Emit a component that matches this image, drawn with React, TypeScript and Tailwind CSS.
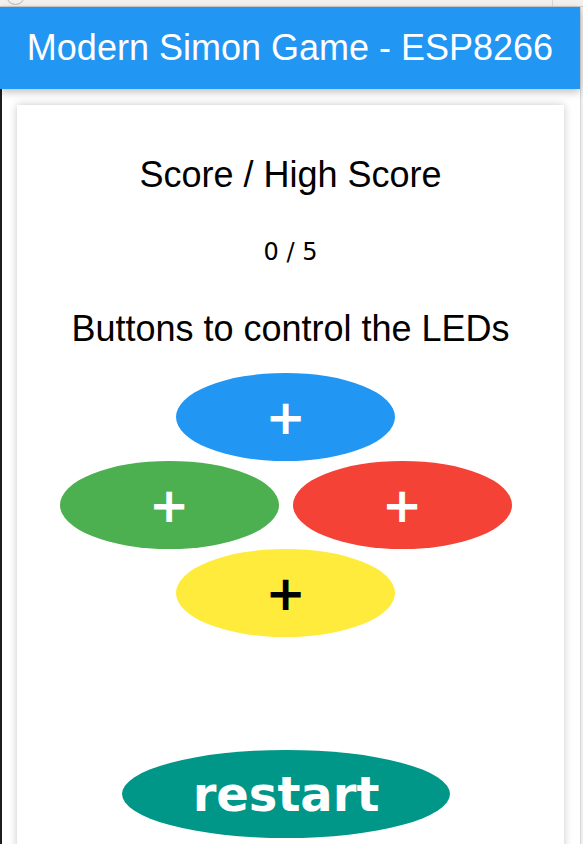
import React from "react";

const pads = {
  blue: "bg-[#2196F3] text-white",
  green: "bg-[#4CAF50] text-white",
  red: "bg-[#F44336] text-white",
  yellow: "bg-[#FFEB3B] text-black",
};

function Pad({ color }: { color: keyof typeof pads }) {
  return (
    <button
      type="button"
      className={`flex h-[88px] w-[219px] items-center justify-center rounded-[50%] font-['DejaVu_Sans',sans-serif] text-[48px] font-bold leading-none ${pads[color]}`}
    >
      +
    </button>
  );
}

export default function App() {
  return (
    <div className="flex h-[844px] flex-col overflow-hidden bg-white font-['Liberation_Sans',Arial,sans-serif]">
      {/* browser chrome sliver */}
      <div className="relative h-[7px] shrink-0 border-b border-[#cfcdca] bg-[#f2f1ef]">
        <div className="absolute left-[6px] top-[-14px] h-[19px] w-[19px] rounded-full border border-[#b9b7b4]" />
        <div className="absolute left-[145px] top-[-6px] h-[6px] w-[330px] rounded-b-[3px] border border-[#d9d7d4] bg-[#f7f6f5]" />
        <div className="absolute left-[552px] top-0 h-[6px] w-px bg-[#d9d7d4]" />
      </div>

      <div className="flex min-h-0 flex-1">
        <div className="relative flex min-w-0 flex-1 flex-col">
          <header className="relative z-10 flex h-[82px] shrink-0 items-center justify-center bg-[#2196F3] shadow-[0_3px_8px_rgba(0,0,0,0.25)]">
            <h1 className="text-[36px] leading-[42px] text-white">Modern Simon Game - ESP8266</h1>
          </header>

          <main className="flex flex-1 border-l-2 border-[#1d1d1d] pl-[15px] pr-4 pt-4">
            <section className="flex w-full flex-col items-center bg-white pb-10 text-black shadow-[0_0_8px_rgba(0,0,0,0.22)]">
              <h2 className="mt-[49px] text-[36px] leading-[42px]">Score / High Score</h2>
              <p className="mt-[42px] font-['DejaVu_Sans',sans-serif] text-[24px] leading-[28px]">0 / 5</p>
              <h2 className="mt-[42px] text-[36px] leading-[42px]">Buttons to control the LEDs</h2>

              <div className="mt-[23px] flex flex-col items-center pr-[10px]">
                <Pad color="blue" />
                <div className="flex gap-[14px]">
                  <Pad color="green" />
                  <Pad color="red" />
                </div>
                <Pad color="yellow" />
              </div>

              <button
                type="button"
                className="mr-[9px] mt-[113px] flex h-[88px] w-[328px] items-center justify-center rounded-[50%] bg-[#009688] font-['DejaVu_Sans',sans-serif] text-[48px] font-bold leading-none text-white"
              >
                restart
              </button>
            </section>
          </main>
        </div>
        <div className="w-[3px] shrink-0 border-l border-[#d6d6d6] bg-[#efefef]" />
      </div>
    </div>
  );
}
